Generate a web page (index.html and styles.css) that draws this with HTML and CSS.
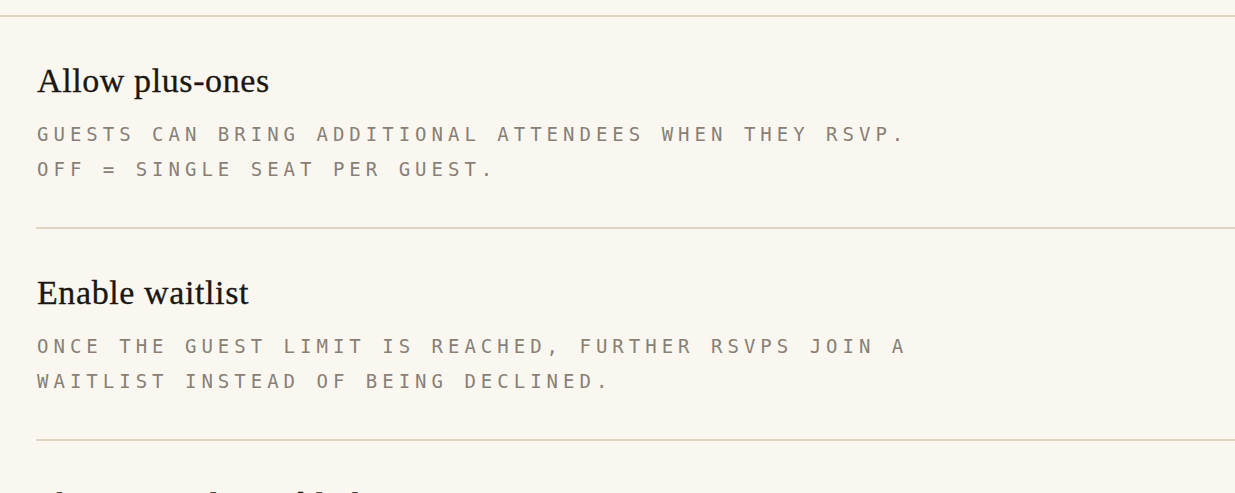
FILE: index.html
```html
<!DOCTYPE html>
<html lang="en">

<head>
    <meta charset="utf-8">
    <meta name="viewport" content="width=device-width, initial-scale=1.0">
    <title>Event settings</title>
    <link rel="stylesheet" href="styles.css">
</head>

<body>
    <section class="indstillinger">
        <article class="punkt">
            <h3 class="titel">Allow plus-ones</h3>
            <p class="forklaring">Guests can bring additional attendees when they RSVP. Off = single seat per guest.</p>
        </article>
        <article class="punkt">
            <h3 class="titel">Enable waitlist</h3>
            <p class="forklaring">Once the guest limit is reached, further RSVPs join a waitlist instead of being declined.</p>
        </article>
        <article class="punkt">
            <h3 class="titel">Show guest list publicly</h3>
            <p class="forklaring">Attendees can see who else is coming on the event page.</p>
        </article>
    </section>
</body>

</html>
```

FILE: styles.css
```css
body {
    margin: 0;
    background: #faf7f0;
    font-family: 'Liberation Serif', serif;
}

.indstillinger {
    margin-top: 15px;
    border-top: 2px solid #ddd4c2;
    padding-left: 36px;
}

.punkt {
    padding: 45px 0 40px 1px;
    border-bottom: 2px solid #ddd4c2;
}

.titel {
    font-size: 34px;
    font-weight: 400;
    line-height: 38px;
    letter-spacing: 0.6px;
    -webkit-text-stroke: 0.3px currentColor;
    color: #1a1713;
    margin: 0 0 17px 0;
}

.forklaring {
    font-family: 'DejaVu Sans Mono', monospace;
    font-size: 19px;
    line-height: 35px;
    letter-spacing: 5px;
    text-transform: uppercase;
    color: #887f77;
    max-width: 910px;
    margin: 0;
}
```
